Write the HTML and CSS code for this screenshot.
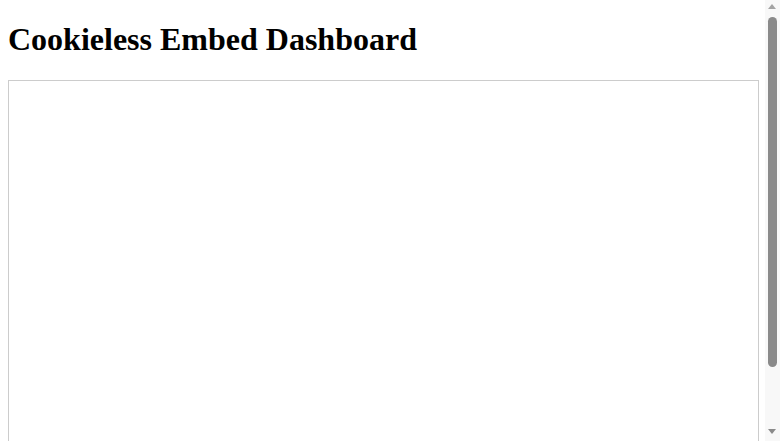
FILE: index.html
```html
<!DOCTYPE html>
<html>
<head>
<meta charset="utf-8">
<title>Cookieless Embed Dashboard</title>
<link rel="stylesheet" href="styles.css">
</head>
<body>
<h1 class="title">Cookieless Embed Dashboard</h1>
<div class="embed-frame"></div>
<div class="scrollbar">
  <span class="arrow arrow-up"></span>
  <span class="thumb"></span>
  <span class="arrow arrow-down"></span>
</div>
</body>
</html>
```
FILE: styles.css
```css
html {
  overflow: hidden;
}
body {
  margin: 0;
  padding: 0 23px 8px 8px;
  font-family: "Liberation Serif", "Times New Roman", serif;
  background: #fff;
}
.title {
  font-size: 32px;
  font-weight: bold;
  margin: 21.44px 0;
}
.embed-frame {
  box-sizing: content-box;
  width: 100%;
  height: 428px;
  border: 1px solid #ccc;
}
.scrollbar {
  position: fixed;
  top: 0;
  right: 0;
  width: 15px;
  height: 100%;
  background: #f8f8f8;
}
.thumb {
  position: absolute;
  top: 17px;
  left: 3px;
  width: 9px;
  height: 350px;
  border-radius: 5px;
  background: #8a8a8a;
}
.arrow {
  position: absolute;
  left: 3px;
  width: 0;
  height: 0;
  border-left: 4.5px solid transparent;
  border-right: 4.5px solid transparent;
}
.arrow-up {
  top: 4px;
  border-bottom: 5px solid #a3a3a3;
}
.arrow-down {
  bottom: 7px;
  border-top: 5px solid #8a8a8a;
}
```
